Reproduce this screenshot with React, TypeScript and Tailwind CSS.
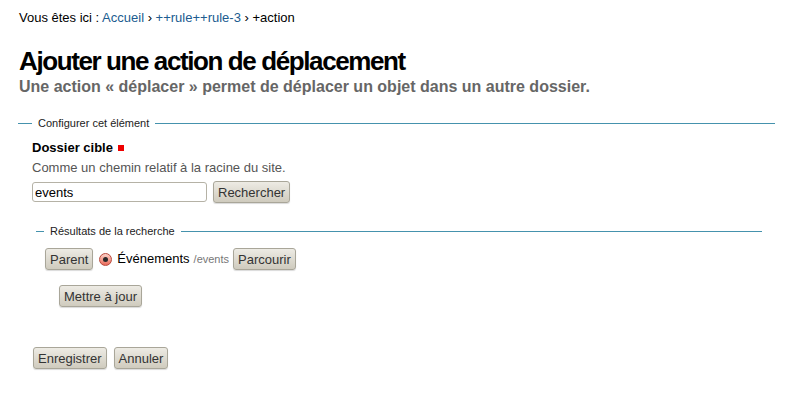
const btn =
  "rounded-[3px] border border-[#a9a699] bg-gradient-to-b from-[#edebe4] to-[#cfcbbe] px-[4px] h-[22px] text-[13px] leading-none text-[#333] shadow-[0_1px_1px_rgba(0,0,0,0.15)]";

const Legend = ({ children, dash }: { children: React.ReactNode; dash: string }) => (
  <div className="flex items-center h-[15px]">
    <div className={dash + " border-t border-[#4592ad]"} />
    <span className="px-[6px] text-[11px] leading-[15px] text-[#222]">{children}</span>
    <div className="flex-1 border-t border-[#4592ad]" />
  </div>
);

export default function App() {
  return (
    <div className="min-h-[418px] w-[789px] bg-white font-['Liberation_Sans',Arial,sans-serif] text-[13px] text-black">
      <div className="pl-[19px] pt-[10px] leading-[16px]">
        Vous êtes ici : <a className="text-[#205c90]">Accueil</a> ›{" "}
        <a className="text-[#205c90]">++rule++rule-3</a> › +action
      </div>

      <h1 className="pl-[19px] mt-[20px] text-[26px] font-bold leading-[30px] tracking-[-1.4px]">
        Ajouter une action de déplacement
      </h1>
      <p className="pl-[19px] mt-[2px] text-[16px] font-bold leading-[18px] text-[#666]">
        Une action « déplacer » permet de déplacer un objet dans un autre dossier.
      </p>

      <div className="ml-[18px] mr-[14px] mt-[20px]">
        <Legend dash="w-[14px]">Configurer cet élément</Legend>

        <div className="pl-[14px] pt-[9px]">
          <div className="flex items-center gap-[5px] font-bold leading-[16px]">
            Dossier cible
            <span className="inline-block w-[6px] h-[6px] bg-[#e00]" />
          </div>
          <div className="mt-[4px] text-[#555] leading-[16px]">
            Comme un chemin relatif à la racine du site.
          </div>
          <div className="mt-[5px] flex items-center gap-[6px]">
            <input
              readOnly
              value="events"
              className="w-[175px] h-[20px] rounded-[3px] border border-[#b5b2a6] px-[2px] text-[13px] text-black outline-none"
            />
            <button className={btn}>Rechercher</button>
          </div>

          <div className="mt-[21px] ml-[4px] mr-[13px]">
            <Legend dash="w-[8px]">Résultats de la recherche</Legend>
            <div className="pl-[9px] pt-[9px]">
              <div className="flex items-center">
                <button className={btn}>Parent</button>
                <span className="ml-[6px] w-[13px] h-[13px] rounded-full border border-[#b8493c] bg-gradient-to-b from-[#fbd2ca] to-[#e8695a] flex items-center justify-center">
                  <span className="w-[5px] h-[5px] rounded-full bg-[#2a2a2a]" />
                </span>
                <span className="ml-[5px] text-[13px]">Événements</span>
                <span className="ml-[4px] text-[11px] text-[#777]">/events</span>
                <button className={btn + " ml-[4px]"}>Parcourir</button>
              </div>
              <div className="pl-[14px] mt-[15px]">
                <button className={btn}>Mettre à jour</button>
              </div>
            </div>
          </div>
        </div>

        <div className="pl-[15px] mt-[40px] flex gap-[7px]">
          <button className={btn}>Enregistrer</button>
          <button className={btn}>Annuler</button>
        </div>
      </div>
    </div>
  );
}
